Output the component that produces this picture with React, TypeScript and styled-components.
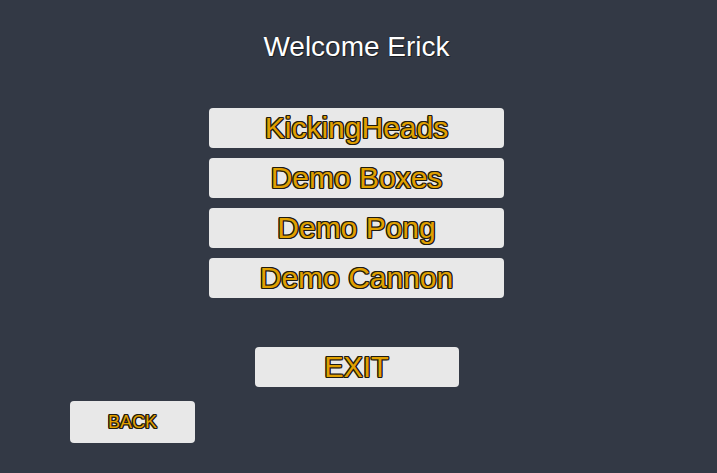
import styled, { createGlobalStyle } from "styled-components";

const GlobalStyle = createGlobalStyle`
  html, body {
    margin: 0;
    padding: 0;
    background: #333945;
  }
  body {
    font-family: "Liberation Sans", Arial, sans-serif;
  }
`;

const Screen = styled.div`
  width: 717px;
  height: 473px;
  box-sizing: border-box;
  padding-right: 4px;
  background: #333945;
  display: flex;
  flex-direction: column;
  align-items: center;
  overflow: hidden;
`;

const Title = styled.h1`
  margin: 31px 0 0;
  height: 32px;
  line-height: 32px;
  font-size: 28px;
  font-weight: normal;
  color: #ffffff;
  text-shadow: 0 0 1px #111, 1px 1px 0 rgba(0, 0, 0, 0.45);
`;

const Menu = styled.div`
  margin-top: 45px;
  display: flex;
  flex-direction: column;
  gap: 10px;
`;

const ink = "#1e1b12";

const Button = styled.button<{ $w: number; $h?: number; $size: number }>`
  width: ${(p) => p.$w}px;
  height: ${(p) => p.$h ?? 40}px;
  padding: 0;
  border: none;
  border-radius: 4px;
  background: #e8e8e8;
  color: #e0a000;
  font-family: "Liberation Sans", Arial, sans-serif;
  font-size: ${(p) => p.$size}px;
  line-height: 1;
  cursor: pointer;
  display: flex;
  align-items: center;
  justify-content: center;
  text-shadow:
    -1.2px 0 0 ${ink}, 1.2px 0 0 ${ink}, 0 -1.2px 0 ${ink}, 0 1.2px 0 ${ink},
    -1px -1px 0 ${ink}, 1px -1px 0 ${ink}, -1px 1px 0 ${ink}, 1px 1px 0 ${ink};
`;

const ExitWrap = styled.div`
  margin-top: 49px;
`;

const BackRow = styled.div`
  align-self: stretch;
  margin-top: 14px;
  padding-left: 70px;
`;

const games = ["KickingHeads", "Demo Boxes", "Demo Pong", "Demo Cannon"];

export default function App() {
  return (
    <>
      <GlobalStyle />
      <Screen>
        <Title>Welcome Erick</Title>
        <Menu>
          {games.map((g) => (
            <Button key={g} $w={295} $size={30}>
              {g}
            </Button>
          ))}
        </Menu>
        <ExitWrap>
          <Button $w={204} $size={29}>EXIT</Button>
        </ExitWrap>
        <BackRow>
          <Button $w={125} $h={42} $size={18}>BACK</Button>
        </BackRow>
      </Screen>
    </>
  );
}
